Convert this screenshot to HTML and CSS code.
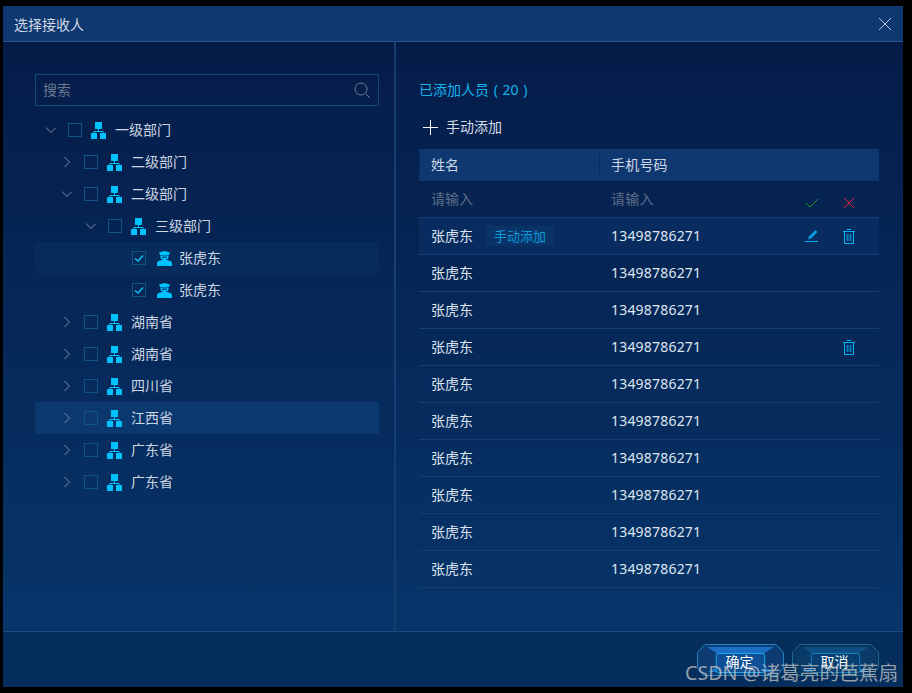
FILE: index.html
```html
<!DOCTYPE html>
<html lang="zh">
<head>
    <meta charset="UTF-8">
    <meta name="viewport" content="width=device-width, initial-scale=1.0">
    <title>选择接收人</title>
    <link rel="stylesheet" href="styles.css">
</head>
<body>
    <svg class="svg-defs" width="0" height="0">
        <symbol id="i-org" viewBox="0 0 15 17">
            <path fill="#00c2ff" d="M4 0h7v7H4zM0 11h6v6H0zM9 11h6v6H9z"/>
            <path fill="none" stroke="#00c2ff" d="M7.500 7v2.500M3 11V9.500h9V11"/>
        </symbol>
        <symbol id="i-user" viewBox="0 0 15 15">
            <path fill="#00c2ff" d="M2 1.500 7.500 0 13 1.500l-1.500 3h-8zM3.500 5h8v1.500C11.500 8 9.500 9 7.500 9S3.500 8 3.500 6.500zM0 15v-3C0 10 3 9.500 5 9h5c2 .5 5 1 5 3v3z"/>
            <path fill="#07508a" d="M5 5.500h5V7H5z"/>
        </symbol>
        <symbol id="i-right" viewBox="0 0 14 14">
            <path fill="none" stroke="#7d8ba3" d="M4.500 2 9.500 7l-5 5"/>
        </symbol>
        <symbol id="i-down" viewBox="0 0 14 14">
            <path fill="none" stroke="#7d8ba3" d="M2 4.500 7 9.500l5-5"/>
        </symbol>
        <symbol id="i-check" viewBox="0 0 14 14">
            <path fill="none" stroke="#17c0f5" stroke-width="1.500" d="M3 7.500 6 10l5-5.500"/>
        </symbol>
        <symbol id="i-trash" viewBox="0 0 12 15">
            <path fill="none" stroke="#0a7cbc" stroke-width="2" d="M4.500 5v7M7.500 5v7"/>
            <path fill="none" stroke="#00b8f5" d="M4 .5h4M0 2.500h12M1.500 2.500v12h9v-12"/>
        </symbol>
        <symbol id="i-pencil" viewBox="0 0 14 13">
            <path fill="#0a9ade" d="M10.500 0 12.500 2 6 8.500 3 9.500 4 6.500z"/>
            <path stroke="#00b4f0" d="M0 11.500h13"/>
        </symbol>
    </svg>

    <div class="dialog">
        <header class="dialog-header">
            <span class="dialog-title">选择接收人</span>
            <svg class="close-icon" width="14" height="14" viewBox="0 0 14 14"><path fill="none" stroke="#b9c6d8" d="M1 1l12 12M13 1 1 13"/></svg>
        </header>

        <div class="dialog-body">
            <section class="left-panel">
                <div class="search-box">
                    <span class="search-placeholder">搜索</span>
                    <svg width="17" height="17" viewBox="0 0 17 17"><circle cx="7" cy="7" r="6" fill="none" stroke="#6b7c96"/><path stroke="#6b7c96" d="M11.500 11.500 16 16"/></svg>
                </div>

                <ul class="tree">
                    <li class="tree-row lvl0"><svg class="arrow"><use href="#i-down"/></svg><span class="check"></span><svg class="node-icon"><use href="#i-org"/></svg><span class="node-label">一级部门</span></li>
                    <li class="tree-row lvl1"><svg class="arrow"><use href="#i-right"/></svg><span class="check"></span><svg class="node-icon"><use href="#i-org"/></svg><span class="node-label">二级部门</span></li>
                    <li class="tree-row lvl1"><svg class="arrow"><use href="#i-down"/></svg><span class="check"></span><svg class="node-icon"><use href="#i-org"/></svg><span class="node-label">二级部门</span></li>
                    <li class="tree-row lvl2"><svg class="arrow"><use href="#i-down"/></svg><span class="check"></span><svg class="node-icon"><use href="#i-org"/></svg><span class="node-label">三级部门</span></li>
                    <li class="tree-row lvl3 hover"><span class="check"><svg width="14" height="14"><use href="#i-check"/></svg></span><svg class="person-icon"><use href="#i-user"/></svg><span class="node-label">张虎东</span></li>
                    <li class="tree-row lvl3"><span class="check"><svg width="14" height="14"><use href="#i-check"/></svg></span><svg class="person-icon"><use href="#i-user"/></svg><span class="node-label">张虎东</span></li>
                    <li class="tree-row lvl1"><svg class="arrow"><use href="#i-right"/></svg><span class="check"></span><svg class="node-icon"><use href="#i-org"/></svg><span class="node-label">湖南省</span></li>
                    <li class="tree-row lvl1"><svg class="arrow"><use href="#i-right"/></svg><span class="check"></span><svg class="node-icon"><use href="#i-org"/></svg><span class="node-label">湖南省</span></li>
                    <li class="tree-row lvl1"><svg class="arrow"><use href="#i-right"/></svg><span class="check"></span><svg class="node-icon"><use href="#i-org"/></svg><span class="node-label">四川省</span></li>
                    <li class="tree-row lvl1 active"><svg class="arrow"><use href="#i-right"/></svg><span class="check"></span><svg class="node-icon"><use href="#i-org"/></svg><span class="node-label">江西省</span></li>
                    <li class="tree-row lvl1"><svg class="arrow"><use href="#i-right"/></svg><span class="check"></span><svg class="node-icon"><use href="#i-org"/></svg><span class="node-label">广东省</span></li>
                    <li class="tree-row lvl1"><svg class="arrow"><use href="#i-right"/></svg><span class="check"></span><svg class="node-icon"><use href="#i-org"/></svg><span class="node-label">广东省</span></li>
                </ul>
            </section>

            <section class="right-panel">
                <div class="added-title">已添加人员 ( 20 )</div>
                <div class="add-manual">
                    <svg width="15" height="15" viewBox="0 0 15 15"><path stroke="#fff" d="M7.500 0v15M0 7.500h15"/></svg>
                    <span class="node-label">手动添加</span>
                </div>

                <div class="table">
                    <div class="table-head">
                        <span class="col-name">姓名</span>
                        <span class="col-phone">手机号码</span>
                    </div>
                    <div class="table-row input-row">
                        <span class="col-name placeholder">请输入</span>
                        <span class="col-phone placeholder">请输入</span>
                        <span class="col-actions">
                            <svg width="14" height="12" viewBox="0 0 14 12"><path fill="none" stroke="#0e9a2a" d="M1 6l4 4 8-8"/></svg>
                            <svg width="12" height="12" viewBox="0 0 12 12"><path fill="none" stroke="#d92b3f" d="M1 1l10 10M11 1 1 11"/></svg>
                        </span>
                    </div>
                    <div class="table-row hover">
                        <span class="col-name">张虎东<em class="tag">手动添加</em></span>
                        <span class="col-phone">13498786271</span>
                        <span class="col-actions">
                            <svg width="14" height="13"><use href="#i-pencil"/></svg>
                            <svg width="12" height="15"><use href="#i-trash"/></svg>
                        </span>
                    </div>
                    <div class="table-row"><span class="col-name">张虎东</span><span class="col-phone">13498786271</span></div>
                    <div class="table-row"><span class="col-name">张虎东</span><span class="col-phone">13498786271</span></div>
                    <div class="table-row">
                        <span class="col-name">张虎东</span>
                        <span class="col-phone">13498786271</span>
                        <span class="col-actions only-trash"><svg width="12" height="15"><use href="#i-trash"/></svg></span>
                    </div>
                    <div class="table-row"><span class="col-name">张虎东</span><span class="col-phone">13498786271</span></div>
                    <div class="table-row"><span class="col-name">张虎东</span><span class="col-phone">13498786271</span></div>
                    <div class="table-row"><span class="col-name">张虎东</span><span class="col-phone">13498786271</span></div>
                    <div class="table-row"><span class="col-name">张虎东</span><span class="col-phone">13498786271</span></div>
                    <div class="table-row"><span class="col-name">张虎东</span><span class="col-phone">13498786271</span></div>
                    <div class="table-row"><span class="col-name">张虎东</span><span class="col-phone">13498786271</span></div>
                </div>
            </section>
        </div>

        <footer class="dialog-footer">
            <button class="bevel-btn primary" type="button">
                <svg width="87" height="32" viewBox="0 0 88 32" preserveAspectRatio="none">
                    <path fill="#0a3f78" stroke="#2b7fb8" d="M8 .5h72l7.500 8v15l-6 8h-75l-6-8v-15z"/>
                    <path fill="#1c6fc4" d="M10 3h68L69 9H19z"/>
                    <path fill="#0d3a70" d="M3 9l7-6 9 6v13l-9 6-7-6zM85 9l-7-6-9 6v13l9 6 7-6z"/>
                    <path fill="#1a78d0" d="M19 24h50l8 4H11z"/>
                    <rect x="19.500" y="9.500" width="49" height="19" rx="2" fill="#0e4f95" stroke="#1ea8e8"/>
                </svg>
                <span>确定</span>
            </button>
            <button class="bevel-btn" type="button">
                <svg width="87" height="32" viewBox="0 0 88 32" preserveAspectRatio="none">
                    <path fill="#063560" stroke="#1f6a90" d="M8 .5h72l7.500 8v15l-6 8h-75l-6-8v-15z"/>
                    <path fill="#0d4f84" d="M10 3h68L69 9H19z"/>
                    <path fill="#0a3a68" d="M3 9l7-6 9 6v13l-9 6-7-6zM85 9l-7-6-9 6v13l9 6 7-6z"/>
                    <path fill="#0e6aa8" d="M19 24h50l8 4H11z"/>
                    <rect x="19.500" y="9.500" width="49" height="19" rx="2" fill="#073f70" stroke="#1680b8"/>
                </svg>
                <span>取消</span>
            </button>
        </footer>
    </div>

    <div class="watermark">CSDN @诸葛亮的芭蕉扇</div>
</body>
</html>
```

FILE: styles.css
```css
* {
    box-sizing: border-box;
}
body {
    margin: 0;
    width: 912px;
    height: 693px;
    overflow: hidden;
    background: #000;
    font-family: "Noto Sans", "Noto Sans CJK SC", sans-serif;
    font-size: 14px;
    color: #d5dde9;
    position: relative;
}
.svg-defs {
    display: block;
    height: 0;
}
.dialog {
    width: 900px;
    height: 681px;
    margin: 6px 0 0 3px;
    display: flex;
    flex-direction: column;
    background: #052e5c;
}

/* header */
.dialog-header {
    height: 36px;
    flex: none;
    display: flex;
    align-items: center;
    justify-content: space-between;
    padding: 0 11px;
    background: #0f3870;
    border-bottom: 1px solid #2a5590;
}
.dialog-title {
    color: #cfd8e6;
}

/* body */
.dialog-body {
    height: 589px;
    flex: none;
    display: flex;
    background: linear-gradient(180deg, #051c48 0%, #07356a 100%);
}
.left-panel {
    width: 393px;
    flex: none;
    padding: 32px 15px 0 32px;
    border-right: 2px solid #153f70;
}
.search-box {
    height: 32px;
    display: flex;
    align-items: center;
    justify-content: space-between;
    padding: 0 7px;
    border: 1px solid #0d4a78;
}
.search-placeholder {
    color: #6b7890;
    margin-bottom: 2px;
}
.tree {
    list-style: none;
    margin: 8px 0 0;
    padding: 0;
}
.tree-row {
    height: 32px;
    display: flex;
    align-items: center;
    color: #cdd6e3;
}
.tree-row.hover {
    background: #072c5c;
}
.tree-row.active {
    background: #0c3870;
}
.node-label {
    margin-bottom: 2px;
}
.lvl0 {
    padding-left: 9px;
}
.lvl1 {
    padding-left: 25px;
}
.lvl2 {
    padding-left: 49px;
}
.lvl3 {
    padding-left: 97px;
}
.arrow {
    width: 14px;
    height: 14px;
    flex: none;
    margin-right: 10px;
}
.check {
    width: 14px;
    height: 14px;
    flex: none;
    display: block;
    border: 1px solid #0d5585;
    margin-right: 9px;
}
.check svg {
    display: block;
    margin: -1px;
}
.node-icon {
    width: 15px;
    height: 17px;
    flex: none;
    margin: 1px 9px 0 0;
}
.person-icon {
    width: 15px;
    height: 15px;
    flex: none;
    margin: 1px 7px 0 2px;
}

/* right side */
.right-panel {
    flex: 1;
    padding: 36px 24px 0 23px;
}
.added-title {
    height: 24px;
    line-height: 24px;
    color: #14b4ee;
    word-spacing: 1px;
}
.add-manual {
    display: flex;
    align-items: center;
    gap: 8px;
    height: 24px;
    margin-top: 13px;
    padding-left: 4px;
    color: #d5dde9;
}
.table {
    margin-top: 10px;
}
.table-head {
    height: 32px;
    display: flex;
    align-items: center;
    background: #0f3870;
    color: #cdd6e3;
}
.table-head .col-name,
.table-head .col-phone {
    border-left: 1px solid #0a2a58;
    padding-left: 11px;
}
.table-row {
    height: 37px;
    display: flex;
    align-items: center;
    border-bottom: 1px solid #153f70;
    color: #dfe5ef;
}
.table-row.hover {
    background: #082c60;
}
.col-name {
    width: 180px;
    flex: none;
    padding-left: 12px;
    margin-bottom: 2px;
}
.col-phone {
    width: 180px;
    flex: none;
    padding-left: 12px;
    letter-spacing: 0.2px;
    margin-bottom: 2px;
}
.col-actions {
    flex: 1;
    display: flex;
    align-items: center;
    gap: 24px;
    padding-left: 26px;
}
.input-row .col-actions {
    margin-top: 8px;
}
.only-trash {
    padding-left: 64px;
}
.placeholder {
    color: #5f6e88;
}
.tag {
    display: inline-block;
    font-style: normal;
    font-size: 13px;
    line-height: 20px;
    margin-left: 13px;
    padding: 0 8px;
    background: #0a3468;
    color: #0e9ad8;
    border-radius: 2px;
}

/* footer */
.dialog-footer {
    flex: 1;
    display: flex;
    justify-content: flex-end;
    align-items: flex-start;
    gap: 8px;
    padding: 12px 24px 0 0;
    border-top: 1px solid #1f4a7c;
    background: #052e5c;
}
.bevel-btn {
    width: 87px;
    height: 32px;
    padding: 0;
    border: none;
    background: none;
    display: grid;
    font: inherit;
    color: #fff;
}
.bevel-btn svg,
.bevel-btn span {
    grid-area: 1 / 1;
}
.bevel-btn span {
    line-height: 35px;
    padding-right: 2px;
}
.watermark {
    position: absolute;
    left: 685px;
    top: 659px;
    font-size: 19.700px;
    line-height: 28px;
    color: rgba(205, 205, 205, 0.72);
    white-space: nowrap;
}
```
